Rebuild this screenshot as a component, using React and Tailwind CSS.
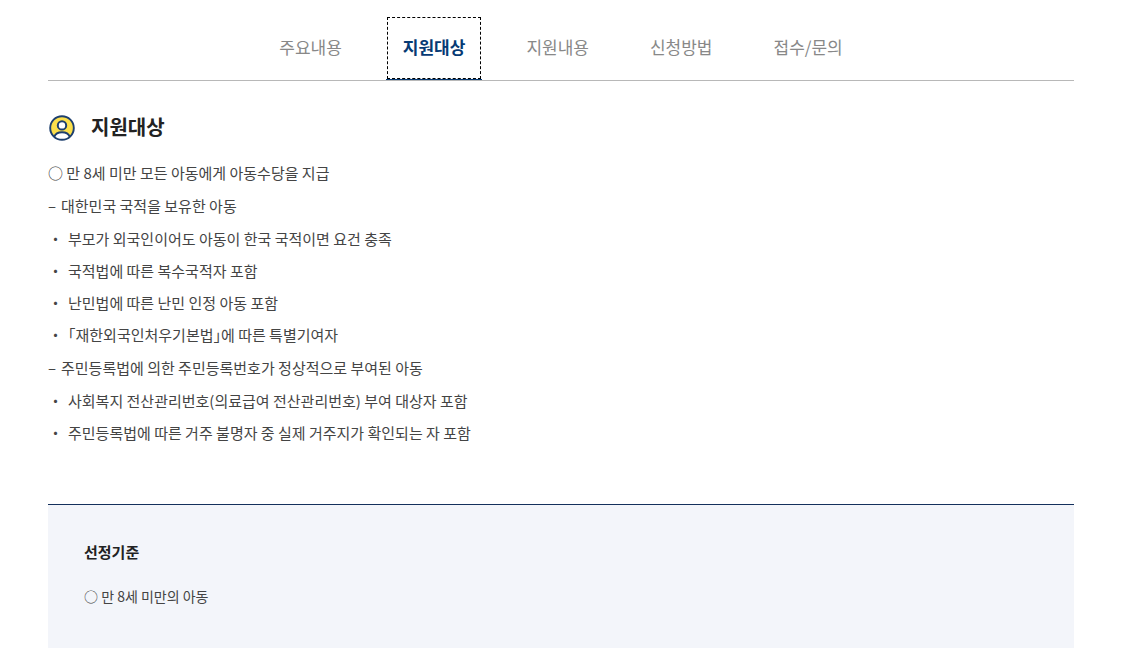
const tabs = [
  { id: "summary", label: "주요내용" },
  { id: "target", label: "지원대상", active: true },
  { id: "benefit", label: "지원내용" },
  { id: "apply", label: "신청방법" },
  { id: "contact", label: "접수/문의" },
];

const groups = [
  {
    title: "대한민국 국적을 보유한 아동",
    items: [
      "부모가 외국인이어도 아동이 한국 국적이면 요건 충족",
      "국적법에 따른 복수국적자 포함",
      "난민법에 따른 난민 인정 아동 포함",
      "｢재한외국인처우기본법｣에 따른 특별기여자",
    ],
  },
  {
    title: "주민등록법에 의한 주민등록번호가 정상적으로 부여된 아동",
    items: [
      "사회복지 전산관리번호(의료급여 전산관리번호) 부여 대상자 포함",
      "주민등록법에 따른 거주 불명자 중 실제 거주지가 확인되는 자 포함",
    ],
  },
];

function PersonIcon() {
  return (
    <svg className="size-7" viewBox="0 -1 28 28" fill="none" aria-hidden="true">
      <circle cx="14" cy="14" r="11.8" fill="#fbdf4c" />
      <path d="M6.4 22.8C7.6 19.6 10.4 18.2 14 18.2s6.4 1.4 7.6 4.6A11.8 11.8 0 0 1 14 25.8a11.8 11.8 0 0 1-7.6-3Z" fill="#fff" />
      <path d="M6.2 22.8C7.4 19.6 10.4 18.2 14 18.2s6.6 1.4 7.8 4.6" stroke="#1d3f6e" strokeWidth="1.9" />
      <circle cx="14" cy="11.4" r="4.2" fill="#fff" stroke="#1d3f6e" strokeWidth="2" />
      <circle cx="14" cy="14" r="11.8" stroke="#1d3f6e" strokeWidth="1.9" />
    </svg>
  );
}

export default function App() {
  return (
    <div className="bg-white px-12 pt-4 pb-1.5 font-['Noto_Sans_CJK_KR',sans-serif] text-[#444]">
      <nav className="flex justify-center gap-[27px] border-b border-[#b8b8b8]" aria-label="서비스 상세">
        {tabs.map((tab) => (
          <a
            key={tab.id}
            href={`#${tab.id}`}
            aria-current={tab.active ? "true" : undefined}
            className={
              tab.active
                ? "flex h-16 items-center border-b border-[#063a74] px-px pt-px text-[17px] font-bold text-[#063a74]"
                : "flex h-16 items-center px-[17px] pb-0.5 text-[17px] text-[#888]"
            }
          >
            {tab.active ? (
              <span className="flex h-full items-center border border-dashed border-black px-[15px] pb-0.5">
                {tab.label}
              </span>
            ) : (
              tab.label
            )}
          </a>
        ))}
      </nav>

      <main>
        <section id="target" className="pt-8">
          <h2 className="flex items-center gap-[15px] text-xl leading-7 font-bold text-[#222]">
            <PersonIcon />
            지원대상
          </h2>
          <div className="mt-4 flex flex-col gap-px text-[15px] leading-8">
            <p>○ 만 8세 미만 모든 아동에게 아동수당을 지급</p>
            <ul className="flex flex-col gap-px">
              {groups.map((group) => (
                <li key={group.title}>
                  <div className="flex">
                    <span className="w-[13px]">–</span>
                    {group.title}
                  </div>
                  <ul className="mt-px">
                    {group.items.map((item) => (
                      <li key={item} className="flex">
                        <span className="w-5">・</span>
                        {item}
                      </li>
                    ))}
                  </ul>
                </li>
              ))}
            </ul>
          </div>
        </section>

        <section className="mt-[55px] border-t border-[#14305c] bg-[#f3f5fa] px-9 pt-[35px] pb-9">
          <h3 className="text-[15px] leading-6 font-bold text-[#222]">선정기준</h3>
          <p className="mt-4 text-sm leading-8">○ 만 8세 미만의 아동</p>
        </section>
      </main>
    </div>
  );
}
